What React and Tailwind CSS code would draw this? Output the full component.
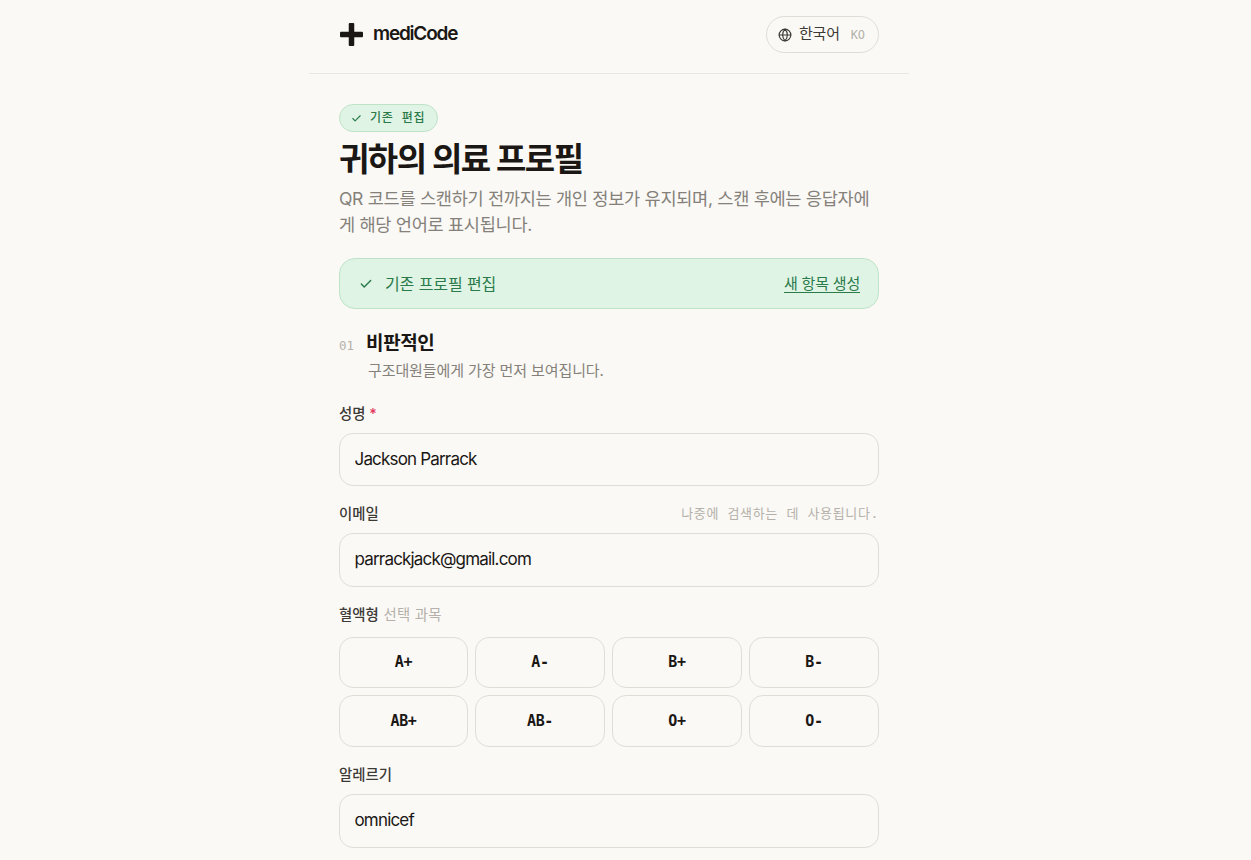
import { Check, Globe } from "lucide-react";

const sans = "font-['Inter','Noto_Sans_CJK_KR',sans-serif]";
const mono = "font-['DejaVu_Sans_Mono','Noto_Sans_CJK_KR',monospace]";

const bloodTypes = ["A+", "A-", "B+", "B-", "AB+", "AB-", "O+", "O-"];

const Field = ({ value }) => (
  <input
    readOnly
    value={value}
    className="block w-full h-[53.600px] rounded-[14px] border border-[#e0ddd7] bg-[#faf9f6] px-[14.500px] pb-[1px] text-[17px] tracking-[-0.82px] text-[#1a1714] outline-none"
  />
);

const App = () => {
  return (
    <div className={`h-[860px] overflow-hidden bg-[#faf9f6] pr-[33px] text-[#1a1714] ${sans}`}>
      <div className="mx-auto w-[600px]">
        {/* Header */}
        <header className="flex h-[74px] items-start justify-between border-b border-[#e9e7e2] px-[30px] pt-[16px]">
          <div className="flex h-[36px] items-center gap-[10px] pl-[1px]">
            <svg width="23" height="23" viewBox="0 0 23 23" className="text-[#1a1714]">
              <rect x="8.750" y="0" width="5.500" height="23" rx="1" fill="currentColor" />
              <rect x="0" y="8.750" width="23" height="5.500" rx="1" fill="currentColor" />
            </svg>
            <span className="text-[19px] font-semibold tracking-[-1.2px]">mediCode</span>
          </div>
          <div className="flex h-[37px] w-[113px] items-center rounded-full border border-[#e0ddd7] pl-[11px]">
            <Globe size={14} className="text-[#3d3a36]" />
            <span className="ml-[7px] text-[15px] tracking-[-0.2px] text-[#3d3a36]">한국어</span>
            <span className={`ml-[11px] text-[12px] tracking-[-0.2px] text-[#b5b1aa] ${mono}`}>KO</span>
          </div>
        </header>

        <main className="px-[30px] pt-[30px]">
          {/* Title */}
          <div className="flex h-[28px] w-[99px] items-center rounded-full border border-[#bfe3c9] bg-[#e0f4e5] pl-[11px]">
            <Check size={11} strokeWidth={2.5} className="text-[#2a7a4a]" />
            <span className={`ml-[8px] text-[12px] font-medium tracking-[0.8px] whitespace-pre text-[#2a7a4a] ${mono}`}>기존 편집</span>
          </div>
          <h1 className="mt-[6px] text-[33px] leading-[42px] font-bold tracking-[-1.5px]">귀하의 의료 프로필</h1>
          <p className="mt-[6px] text-[17.600px] leading-[26px] tracking-[-0.33px] text-[#85817a]">
            QR 코드를 스캔하기 전까지는 개인 정보가 유지되며, 스캔 후에는 응답자에게 해당 언어로 표시됩니다.
          </p>

          {/* Banner */}
          <div className="mt-[20px] flex h-[51px] items-center justify-between rounded-[16px] border border-[#bfe3c9] bg-[#e0f4e5] pl-[19px] pr-[18px] text-[#2a7a4a]">
            <div className="flex items-center gap-[12px]">
              <Check size={14} strokeWidth={2.5} />
              <span className="text-[16px] tracking-[-0.1px]">기존 프로필 편집</span>
            </div>
            <span className="border-b border-[#2a7a4a] text-[15px] leading-[17px] tracking-[-0.2px]">새 항목 생성</span>
          </div>

          {/* Section */}
          <div className="mt-[22px] flex items-baseline gap-[12px]">
            <span className={`text-[12.500px] text-[#b5b1aa] ${mono}`}>01</span>
            <h2 className="text-[19px] leading-[26px] font-bold tracking-[-0.4px]">비판적인</h2>
          </div>
          <p className="mt-[4px] ml-[29px] text-[15px] leading-[20px] tracking-[-0.1px] text-[#85817a]">
            구조대원들에게 가장 먼저 보여집니다.
          </p>

          <div className="mt-[24px] text-[14.400px] leading-[18px] font-medium text-[#3d3a36]">
            성명 <span className="text-[#e0355a]">*</span>
          </div>
          <div className="mt-[9.600px]">
            <Field value="Jackson Parrack" />
          </div>

          <div className="mt-[18.400px] flex items-center justify-between">
            <span className="text-[14.400px] leading-[18px] font-medium text-[#3d3a36]">이메일</span>
            <span className={`text-[13px] leading-[18px] tracking-[0.65px] text-[#b5b1aa] ${mono}`}>나중에 검색하는 데 사용됩니다.</span>
          </div>
          <div className="mt-[10.400px]">
            <Field value="parrackjack@gmail.com" />
          </div>

          <div className="mt-[19px] text-[14.400px] leading-[18px] font-medium text-[#3d3a36]">
            혈액형 <span className="ml-[1px] font-normal tracking-[0.2px] text-[#b5b1aa]">선택 과목</span>
          </div>
          <div className="mt-[13px] grid grid-cols-[129px_130px_130px_130px] gap-[7px]">
            {bloodTypes.map((type) => (
              <div
                key={type}
                className={`flex h-[51.500px] items-center justify-center rounded-[14px] border border-[#e0ddd7] text-[15px] font-bold tracking-[-0.400px] text-[#1a1714] ${mono}`}
              >
                {type}
              </div>
            ))}
          </div>

          <div className="mt-[19px] text-[14.400px] leading-[18px] font-medium text-[#3d3a36]">알레르기</div>
          <div className="mt-[10.400px]">
            <Field value="omnicef" />
          </div>
        </main>
      </div>
    </div>
  );
};

export default App;
